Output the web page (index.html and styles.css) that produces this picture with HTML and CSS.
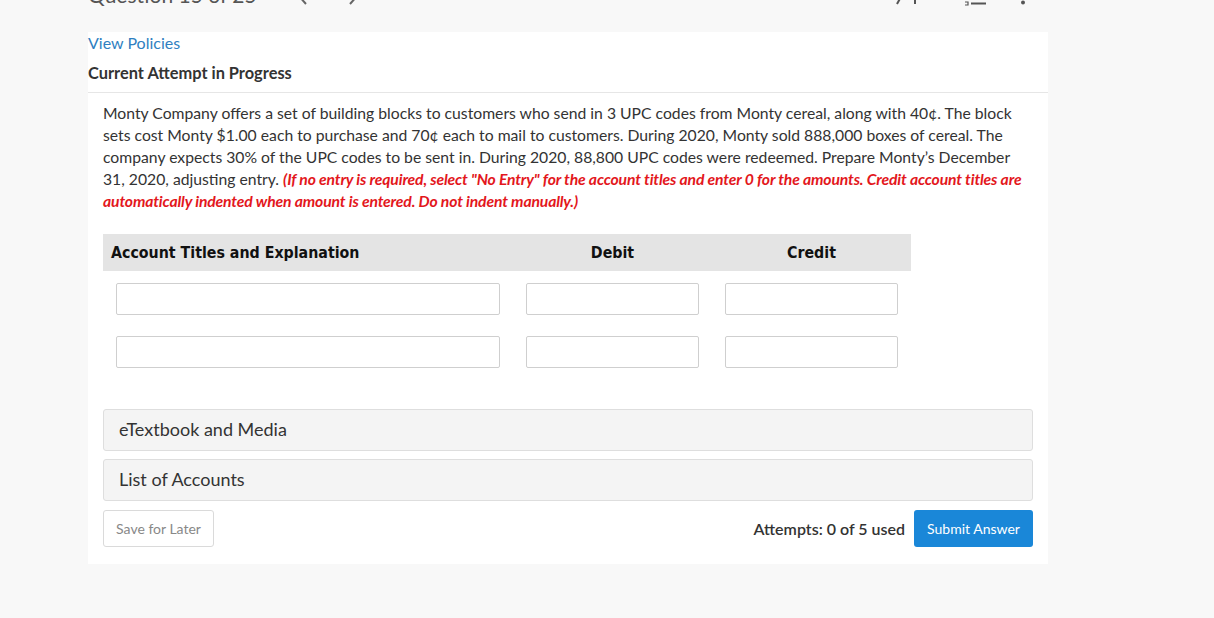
FILE: index.html
```html
<!DOCTYPE html>
<html>
<head>
<meta charset="utf-8">
<link rel="stylesheet" href="styles.css">
</head>
<body>
<div class="topbar">
  <div class="topbar-inner">
    <div class="q-title">Question 15 of 25</div>
    <div class="nav-arrows">
      <svg class="chev" width="14" height="22" viewBox="0 0 14 22"><path d="M11 2 L3 11 L11 20" fill="none" stroke="#666" stroke-width="2"/></svg>
      <svg class="chev" width="14" height="22" viewBox="0 0 14 22"><path d="M3 2 L11 11 L3 20" fill="none" stroke="#666" stroke-width="2"/></svg>
    </div>
    <div class="spacer"></div>
    <div class="tools">
      <svg width="16" height="22" viewBox="0 0 16 22"><path d="M14 2 L4 20" stroke="#555" stroke-width="2"/></svg>
      <svg width="6" height="22" viewBox="0 0 6 22"><path d="M3 4 L3 20" stroke="#555" stroke-width="2"/></svg>
      <svg class="list-ic" width="22" height="22" viewBox="0 0 22 22"><path d="M0 18 H3 V21 H0" fill="none" stroke="#555" stroke-width="1.2"/><path d="M6 19.5 H21" stroke="#555" stroke-width="2"/><path d="M6 11 H21 M6 3 H21" stroke="#555" stroke-width="2"/></svg>
      <svg class="dots" width="6" height="22" viewBox="0 0 6 22"><circle cx="3" cy="4" r="2" fill="#555"/><circle cx="3" cy="11" r="2" fill="#555"/><circle cx="3" cy="18.5" r="2" fill="#555"/></svg>
    </div>
  </div>
</div>

<div class="card">
  <div class="card-head">
    <a class="policies">View Policies</a>
    <div class="attempt">Current Attempt in Progress</div>
  </div>
  <div class="card-body">
    <p class="question">Monty Company offers a set of building blocks to customers who send in 3 UPC codes from Monty cereal, along with 40¢. The block sets cost Monty $1.00 each to purchase and 70¢ each to mail to customers. During 2020, Monty sold 888,000 boxes of cereal. The company expects 30% of the UPC codes to be sent in. During 2020, 88,800 UPC codes were redeemed. Prepare Monty’s December 31, 2020, adjusting entry. <em class="note">(If no entry is required, select "No Entry" for the account titles and enter 0 for the amounts. Credit account titles are automatically indented when amount is entered. Do not indent manually.)</em></p>

    <div class="journal">
      <div class="jh jh-acct">Account Titles and Explanation</div>
      <div class="jh jh-num">Debit</div>
      <div class="jh jh-num">Credit</div>

      <div class="jc jc-first"><input class="inp" type="text"></div>
      <div class="jc jc-first"><input class="inp" type="text"></div>
      <div class="jc jc-first"><input class="inp" type="text"></div>

      <div class="jc"><input class="inp" type="text"></div>
      <div class="jc"><input class="inp" type="text"></div>
      <div class="jc"><input class="inp" type="text"></div>
    </div>

    <div class="panels">
      <div class="panel">eTextbook and Media</div>
      <div class="panel">List of Accounts</div>
    </div>

    <div class="actions">
      <button class="btn-save">Save for Later</button>
      <div class="spacer"></div>
      <span class="attempts">Attempts: 0 of 5 used</span>
      <button class="btn-submit">Submit Answer</button>
    </div>
  </div>
</div>
</body>
</html>
```

FILE: styles.css
```css
html, body {
  margin: 0;
  padding: 0;
}
body {
  background: #f8f8f8;
  font-family: Lato, "Open Sans", sans-serif;
  color: #333;
  height: 618px;
  overflow: hidden;
}
.topbar {
  height: 32px;
  overflow: hidden;
}
.topbar-inner {
  margin-top: -22px;
  height: 28px;
  display: flex;
  align-items: flex-end;
  padding-left: 88px;
  padding-right: 188px;
}
.q-title {
  font-size: 21px;
  line-height: 28px;
  color: #555;
  margin-bottom: -3px;
}
.nav-arrows {
  display: flex;
  gap: 38px;
  margin-left: 38px;
}
.spacer {
  flex: 1;
}
.tools {
  display: flex;
  align-items: flex-end;
  gap: 3px;
}
.list-ic {
  margin-left: 44px;
}
.dots {
  margin-left: 30px;
}
.card {
  margin-left: 88px;
  width: 960px;
  background: #fff;
  padding-bottom: 17px;
}
.card-head {
  padding-top: 1px;
  border-bottom: 1px solid #e6e6e6;
  padding-bottom: 9px;
}
.policies {
  display: block;
  font-size: 16px;
  line-height: 20px;
  color: #2f7fc1;
  cursor: pointer;
}
.attempt {
  margin-top: 10px;
  font-size: 16.4px;
  line-height: 20px;
  font-weight: 700;
  color: #333;
}
.card-body {
  padding: 9px 15px 0 15px;
}
.question {
  margin: 0;
  font-size: 15.72px;
  line-height: 22px;
  color: #333;
}
.note {
  color: #e3171c;
  font-weight: 700;
  letter-spacing: -0.15px;
}
.journal {
  margin-top: 22px;
  width: 808px;
  display: grid;
  grid-template-columns: 410px 199px 199px;
}
.jh {
  background: #e4e4e4;
  height: 37px;
  line-height: 38px;
  font-family: "DejaVu Sans Condensed", "DejaVu Sans", sans-serif;
  font-weight: 700;
  font-size: 15.8px;
  color: #111;
}
.jh-acct {
  padding-left: 8px;
}
.jh-num {
  text-align: center;
}
.jc {
  padding: 21px 13px 0 13px;
}
.jc-first {
  padding-top: 12px;
}
.inp {
  display: block;
  box-sizing: border-box;
  width: 100%;
  height: 32px;
  margin: 0;
  border: 1px solid #cfcfcf;
  border-radius: 2px;
  background: #fff;
}
.panels {
  margin-top: 41px;
  display: flex;
  flex-direction: column;
  gap: 8px;
}
.panel {
  box-sizing: border-box;
  height: 42px;
  line-height: 39px;
  padding-left: 15px;
  background: #f4f4f4;
  border: 1px solid #dedede;
  border-radius: 3px;
  font-size: 18px;
  color: #333;
}
.actions {
  margin-top: 9px;
  display: flex;
  align-items: center;
}
.btn-save {
  box-sizing: border-box;
  width: 111px;
  height: 37px;
  background: #fff;
  border: 1px solid #dadada;
  border-radius: 3px;
  font-family: Lato, sans-serif;
  font-size: 14px;
  color: #888;
  padding: 0;
}
.attempts {
  font-size: 16px;
  font-weight: 600;
  color: #333;
  margin-right: 9px;
}
.btn-submit {
  box-sizing: border-box;
  width: 119px;
  height: 37px;
  background: #1a87d8;
  border: none;
  border-radius: 3px;
  font-family: Lato, sans-serif;
  font-size: 14px;
  color: #fff;
  padding: 0;
}
```
